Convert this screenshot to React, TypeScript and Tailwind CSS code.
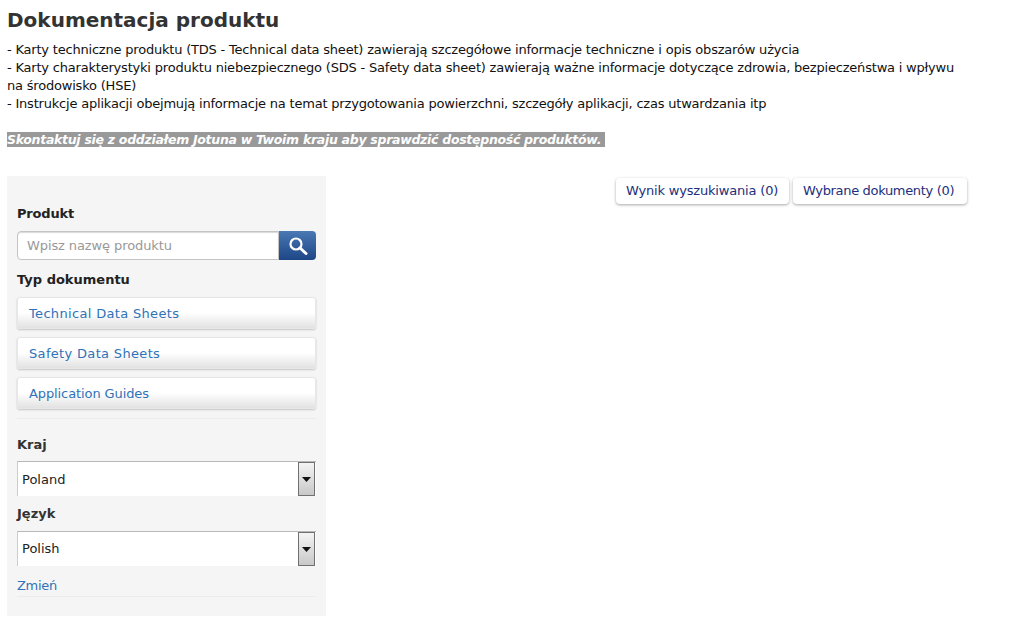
import React from "react";

const Caret = () => (
  <div className="w-[17px] h-[34px] border border-[#707070] bg-gradient-to-b from-[#f4f4f4] to-[#c8c8c8] flex items-center justify-center">
    <svg width="9" height="5" viewBox="0 0 9 5"><path d="M0 0h9L4.5 5z" fill="#111" /></svg>
  </div>
);

const DocButton = ({ label, tracking }: { label: string; tracking: string }) => (
  <div className={`h-[32px] rounded-[3px] border border-[#e6e6e6] bg-gradient-to-b from-white from-50% to-[#e2e2e2] shadow-[0_1px_2px_rgba(0,0,0,0.2)] pl-[11px] pt-[2px] flex items-center text-[13px] text-[#2f72b8] ${tracking}`}>
    {label}
  </div>
);

const SelectBox = ({ value, textCls }: { value: string; textCls?: string }) => (
  <div className="h-[35px] bg-white border-t border-l border-t-[#b8b8b8] border-l-[#cccccc] flex items-center justify-between pl-1 pr-px">
    <span className={`text-[13px] text-[#222] ${textCls ?? ""}`}>{value}</span>
    <Caret />
  </div>
);

const Tab = ({ label, cls }: { label: string; cls: string }) => (
  <div className={`h-[26px] pl-[10px] rounded-[4px] bg-white shadow-[0_1px_3px_rgba(0,0,0,0.35)] flex items-center text-[13px] text-[#1c2f7c] ${cls}`}>
    {label}
  </div>
);

export default function App() {
  return (
    <div className="w-[1014px] h-[642px] bg-white overflow-hidden pl-[7px] pt-[8px] font-['DejaVu_Sans',Verdana,sans-serif] text-[#111]">
      <h1 className="text-[20px] leading-[24px] font-bold text-[#333]">Dokumentacja produktu</h1>
      <div className="mt-[9px] w-[960px] text-[13px] leading-[18px] tracking-[-0.2px]">
        <p>- Karty techniczne produktu (TDS - Technical data sheet) zawierają szczegółowe informacje techniczne i opis obszarów użycia</p>
        <p>- Karty charakterystyki produktu niebezpiecznego (SDS - Safety data sheet) zawierają ważne informacje dotyczące zdrowia, bezpieczeństwa i wpływu na środowisko (HSE)</p>
        <p>- Instrukcje aplikacji obejmują informacje na temat przygotowania powierzchni, szczegóły aplikacji, czas utwardzania itp</p>
      </div>
      <div className="mt-[18px] leading-[15px]">
        <span className="bg-[#999999] text-white text-[12.5px] tracking-[-0.29px] font-bold italic pr-1">Skontaktuj się z oddziałem Jotuna w Twoim kraju aby sprawdzić dostępność produktów.</span>
      </div>
      <div className="mt-[29px] flex items-start">
        <aside className="w-[319px] h-[440px] bg-[#f5f5f5] px-[10px] pt-[29px]">
          <div className="text-[13px] leading-[18px] font-bold text-[#222] tracking-[-0.2px]">Produkt</div>
          <div className="mt-[8px] flex h-[29px]">
            <div className="w-[263px] bg-white border border-[#c4c4c4] rounded-l-[4px] shadow-[inset_0_1px_1px_rgba(0,0,0,0.15)] flex items-center pl-[9px] text-[13px] tracking-[-0.1px] text-[#999]">Wpisz nazwę produktu</div>
            <div className="w-[37px] rounded-r-[4px] bg-gradient-to-b from-[#4a79b4] to-[#1d4686] flex items-center justify-center">
              <svg width="20" height="20" viewBox="0 0 20 20" fill="none" stroke="white">
                <circle cx="8" cy="8" r="5.5" strokeWidth="2.2" />
                <path d="M12 12l6 5.5" strokeWidth="3" strokeLinecap="round" />
              </svg>
            </div>
          </div>
          <div className="mt-[11px] text-[13px] leading-[18px] font-bold text-[#222]">Typ dokumentu</div>
          <div className="mt-[8px] flex flex-col gap-[8px]">
            <DocButton label="Technical Data Sheets" tracking="tracking-[0.33px]" />
            <DocButton label="Safety Data Sheets" tracking="tracking-[0.33px]" />
            <DocButton label="Application Guides" tracking="tracking-[-0.1px]" />
          </div>
          <div className="mt-[9px] border-t border-[#ececec]" />
          <div className="mt-[17px] text-[13px] leading-[18px] font-bold text-[#333]">Kraj</div>
          <div className="mt-[7px]"><SelectBox value="Poland" textCls="pt-[2px]" /></div>
          <div className="mt-[9px] text-[13px] leading-[18px] font-bold text-[#333]">Język</div>
          <div className="mt-[8px]"><SelectBox value="Polish" /></div>
          <div className="mt-[11px] text-[13px] leading-[18px] text-[#2f72b8] tracking-[-0.3px]">Zmień</div>
          <div className="mt-[1px] border-t border-[#ececec]" />
        </aside>
        <div className="ml-[290px] flex gap-[4px] pt-[2px]">
          <Tab label="Wynik wyszukiwania (0)" cls="w-[173px] tracking-[-0.18px]" />
          <Tab label="Wybrane dokumenty (0)" cls="w-[174px] tracking-[-0.33px]" />
        </div>
      </div>
    </div>
  );
}
